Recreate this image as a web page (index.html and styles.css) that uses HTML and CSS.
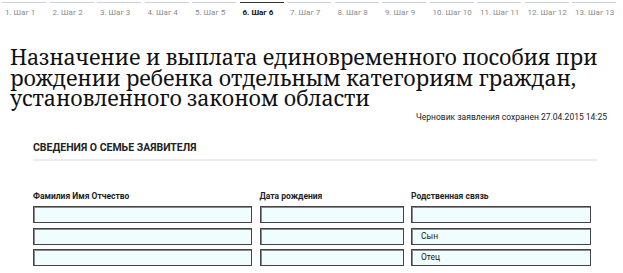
FILE: index.html
```html
<!DOCTYPE html>
<html lang="ru">
<head>
<meta charset="utf-8">
<link rel="stylesheet" href="styles.css">
</head>
<body>
<nav class="steps">
  <div class="step">1. Шаг 1</div>
  <div class="step">2. Шаг 2</div>
  <div class="step">3. Шаг 3</div>
  <div class="step">4. Шаг 4</div>
  <div class="step">5. Шаг 5</div>
  <div class="step active">6. Шаг 6</div>
  <div class="step">7. Шаг 7</div>
  <div class="step">8. Шаг 8</div>
  <div class="step">9. Шаг 9</div>
  <div class="step">10. Шаг 10</div>
  <div class="step">11. Шаг 11</div>
  <div class="step">12. Шаг 12</div>
  <div class="step">13. Шаг 13</div>
</nav>
<h1 class="title">Назначение и выплата единовременного пособия при рождении ребенка отдельным категориям граждан, установленного законом области</h1>
<div class="draft">Черновик заявления сохранен 27.04.2015 14:25</div>
<section class="section">
  <h2 class="section-title">СВЕДЕНИЯ О СЕМЬЕ ЗАЯВИТЕЛЯ</h2>
  <div class="grid">
    <div class="label">Фамилия Имя Отчество</div>
    <div class="label">Дата рождения</div>
    <div class="label">Родственная связь</div>
    <div class="field"></div>
    <div class="field"></div>
    <div class="field"></div>
    <div class="field"></div>
    <div class="field"></div>
    <div class="field">Сын</div>
    <div class="field"></div>
    <div class="field"></div>
    <div class="field">Отец</div>
  </div>
</section>
</body>
</html>
```
FILE: styles.css
```css
html, body {
  margin: 0;
  padding: 0;
  background: #fff;
}
body {
  font-family: Roboto, "Noto Sans", sans-serif;
  color: #111;
  width: 623px;
  height: 273px;
  overflow: hidden;
}
.steps {
  display: flex;
  gap: 3.5px;
  padding: 2px 0 0 2px;
}
.step {
  width: 44px;
  flex: none;
  border-top: 1px solid #cdd2da;
  padding: 5px 0 0 3px;
  box-sizing: border-box;
  font-size: 8px;
  color: #8a8a8a;
  white-space: nowrap;
}
.step.active {
  border-top-color: #333;
  color: #111;
  font-weight: bold;
}
.title {
  margin: 30px 0 0 10px;
  font-family: "Noto Serif", "DejaVu Serif", serif;
  font-weight: normal;
  font-size: 21.5px;
  letter-spacing: -0.15px;
  line-height: 20.5px;
  color: #111;
  width: 600px;
}
.draft {
  text-align: right;
  padding-right: 16px;
  margin-top: 3px;
  font-size: 8.5px;
  color: #222;
}
.section {
  padding: 0 25px 0 33px;
}
.section-title {
  margin: 19px 0 0 0;
  font-size: 10.5px;
  font-weight: bold;
  color: #222;
  padding-bottom: 5px;
  border-bottom: 2px solid #ececec;
  width: 565px;
}
.grid {
  display: grid;
  grid-template-columns: 219px 144px 180px;
  column-gap: 7.5px;
  row-gap: 4.5px;
  margin-top: 32px;
}
.label {
  font-size: 8.5px;
  font-weight: bold;
  color: #222;
  height: 7px;
  line-height: 7px;
  margin-bottom: 2px;
}
.field {
  height: 17px;
  box-sizing: border-box;
  background: #effdff;
  border: 1px solid #444;
  box-shadow: inset 1px 1px 0 #8a8a8a;
  font-size: 8.5px;
  line-height: 15px;
  padding-left: 9px;
  color: #222;
}
```
